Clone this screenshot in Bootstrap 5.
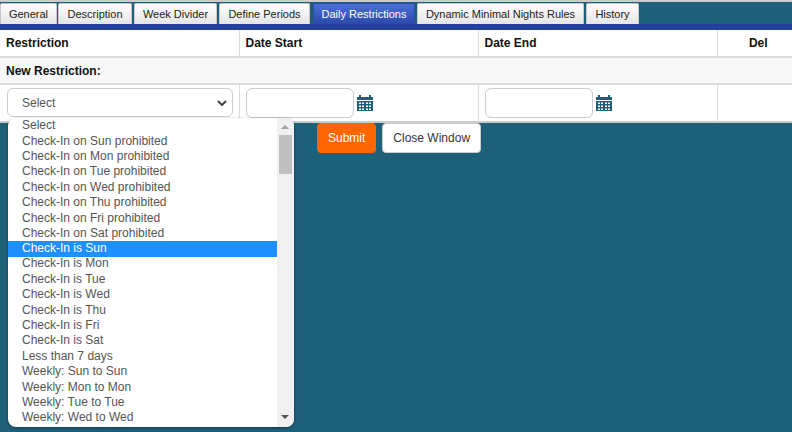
<!DOCTYPE html>
<html lang="en"><head><meta charset="utf-8"><title>Daily Restrictions</title>
<link href="https://cdn.jsdelivr.net/npm/bootstrap@5.3.0/dist/css/bootstrap.min.css" rel="stylesheet">
<style>
html,body{height:100%}
body{margin:0;background:#1f6079;font-family:"Liberation Sans",Arial,sans-serif;font-size:12px;color:#333;overflow:hidden;position:relative;border-top:2px solid #ccc}
.tabbar{padding-top:1px;height:22px;flex-wrap:nowrap;border-bottom:0}
.tabbar .nav-item{flex:none}
.tabbar .nav-link{height:21px;padding:0;text-align:center;line-height:20px;font-size:11px;color:#222;background:linear-gradient(#fff,#e4e4e4);border:1px solid #c8c8c8;border-bottom:0;border-radius:2px 2px 0 0;white-space:nowrap}
.tabbar .nav-link.active{background:linear-gradient(#4a70d8,#2b49a8);color:#fff;border-color:#2b49a8}
.tabbar .nav-item:nth-child(1){width:57px;margin-right:1px}
.tabbar .nav-item:nth-child(2){width:74px;margin-right:2px}
.tabbar .nav-item:nth-child(3){width:83px;margin-right:2px}
.tabbar .nav-item:nth-child(4){width:91px;margin-right:3px}
.tabbar .nav-item:nth-child(5){width:102px;margin-right:2px}
.tabbar .nav-item:nth-child(6){width:167px;margin-right:2px}
.tabbar .nav-item:nth-child(7){width:53px}
.tabband{height:6px;background:#25409a}
.resttable{width:100%;table-layout:fixed;background:#fff;margin:0;border-collapse:collapse;border-bottom:2px solid #ccc}
.resttable th,.resttable td{padding:0 6px;border-color:#ddd;border-style:solid;border-width:0 1px 0 0;vertical-align:middle;font-size:12px;color:#111}
.resttable th:last-child,.resttable td:last-child{border-right:0}
.resttable .delhead{padding-left:13px}
.headrow th{height:27px;border-bottom:2px solid #ddd}
.newrow th{height:27px;background:#f8f8f8;border-bottom:2px solid #ddd;border-right:0}
.formrow td{height:38px;padding-bottom:1px}
.pickbox{height:29px;width:226px;margin:0 0 0 1px;font-size:12px;color:#555;padding:0 14px;border:1px solid #ccc;border-radius:6px;background-color:#fff;background-position:right 5px center;background-size:10px 6px;background-image:url("data:image/svg+xml,%3Csvg xmlns='http://www.w3.org/2000/svg' viewBox='0 0 10 6'%3E%3Cpath fill='none' stroke='%23444' stroke-width='2' d='M1 1l4 4 4-4'/%3E%3C/svg%3E")}
.datebox{width:108px;height:30px;border:1px solid #ccc;border-radius:6px;background:#fff;padding:0 6px;margin-right:3px}
.calicon{display:block;flex:none}
.dropbox{position:absolute;left:8px;top:116px;width:286px;height:309px;background:#fff;border-radius:8px;overflow:hidden;box-shadow:0 1px 3px rgba(0,0,0,.45);display:flex}
.optlist{flex:1;margin:0;padding:.15px 0 0;min-width:0;border-radius:0}
.optlist .list-group-item{border:0;padding:0 0 0 14px;height:15.42px;line-height:15.42px;font-size:12px;color:#555;background:transparent;white-space:nowrap;border-radius:0}
.optlist .list-group-item.active{background:#1e90ff;color:#fff;height:16px;margin-top:0;margin-bottom:-1px}
.scrolltrack{width:17px;flex:none;background:#f0f0f0;position:relative}
.scrollthumb{position:absolute;left:2px;top:17px;width:13px;height:39px;background:#c0c0c0}
.arrowup,.arrowdown{position:absolute;left:4px;width:0;height:0;border-left:4px solid transparent;border-right:4px solid transparent}
.arrowup{top:7px;border-bottom:4px solid #a0a0a0}
.arrowdown{bottom:8px;border-top:4px solid #555}
.actionrow{position:absolute;left:317px;top:121px;gap:6px}
.actionrow .btn{height:30px;font-size:12px;padding:0 10px;border-radius:4px;line-height:28px}
.submitbtn{background:#f60;border:1px solid #f60;color:#fff}
.closebtn{background:#fff;border:1px solid #ccc;color:#333}
</style></head>
<body>
<ul class="nav tabbar d-flex">
<li class="nav-item"><a class="nav-link" href="#">General</a></li>
<li class="nav-item"><a class="nav-link" href="#">Description</a></li>
<li class="nav-item"><a class="nav-link" href="#">Week Divider</a></li>
<li class="nav-item"><a class="nav-link" href="#">Define Periods</a></li>
<li class="nav-item"><a class="nav-link active" href="#">Daily Restrictions</a></li>
<li class="nav-item"><a class="nav-link" href="#">Dynamic Minimal Nights Rules</a></li>
<li class="nav-item"><a class="nav-link" href="#">History</a></li>
</ul>
<div class="tabband"></div>
<table class="table resttable">
<colgroup><col style="width:239px"><col style="width:239px"><col style="width:239px"><col></colgroup>
<thead><tr class="headrow"><th>Restriction</th><th>Date Start</th><th>Date End</th><th class="text-center delhead">Del</th></tr></thead>
<tbody>
<tr class="newrow"><th colspan="4">New Restriction:</th></tr>
<tr class="formrow">
<td><select class="form-select pickbox"><option>Select</option></select></td>
<td><div class="d-flex align-items-center"><input class="datebox" type="text">
<svg class="calicon" width="16" height="17" viewBox="0 0 16 17"><path fill="#1f6079" d="M0 3h2V1h2v2h8V1h2v2h2v3H0z"/><path fill="#1f6079" fill-rule="evenodd" d="M0 7h16v10H0zM2 8.500v1.500h2V8.500zM5 8.500v1.500h2V8.500zM9 8.500v1.500h2V8.500zM12 8.500v1.500h2V8.500zM2 11.500V13h2v-1.500zM5 11.500V13h2v-1.500zM9 11.500V13h2v-1.500zM12 11.500V13h2v-1.500zM2 14.500V16h2v-1.500zM5 14.500V16h2v-1.500zM9 14.500V16h2v-1.500zM12 14.500V16h2v-1.500z"/></svg></div></td>
<td><div class="d-flex align-items-center"><input class="datebox" type="text">
<svg class="calicon" width="16" height="17" viewBox="0 0 16 17"><path fill="#1f6079" d="M0 3h2V1h2v2h8V1h2v2h2v3H0z"/><path fill="#1f6079" fill-rule="evenodd" d="M0 7h16v10H0zM2 8.500v1.500h2V8.500zM5 8.500v1.500h2V8.500zM9 8.500v1.500h2V8.500zM12 8.500v1.500h2V8.500zM2 11.500V13h2v-1.500zM5 11.500V13h2v-1.500zM9 11.500V13h2v-1.500zM12 11.500V13h2v-1.500zM2 14.500V16h2v-1.500zM5 14.500V16h2v-1.500zM9 14.500V16h2v-1.500zM12 14.500V16h2v-1.500z"/></svg></div></td>
<td></td>
</tr></tbody></table>
<div class="d-flex actionrow">
<button class="btn submitbtn" type="button">Submit</button>
<button class="btn closebtn" type="button">Close Window</button>
</div>
<div class="dropbox">
<ul class="list-group optlist">
<li class="list-group-item">Select</li>
<li class="list-group-item">Check-In on Sun prohibited</li>
<li class="list-group-item">Check-In on Mon prohibited</li>
<li class="list-group-item">Check-In on Tue prohibited</li>
<li class="list-group-item">Check-In on Wed prohibited</li>
<li class="list-group-item">Check-In on Thu prohibited</li>
<li class="list-group-item">Check-In on Fri prohibited</li>
<li class="list-group-item">Check-In on Sat prohibited</li>
<li class="list-group-item active">Check-In is Sun</li>
<li class="list-group-item">Check-In is Mon</li>
<li class="list-group-item">Check-In is Tue</li>
<li class="list-group-item">Check-In is Wed</li>
<li class="list-group-item">Check-In is Thu</li>
<li class="list-group-item">Check-In is Fri</li>
<li class="list-group-item">Check-In is Sat</li>
<li class="list-group-item">Less than 7 days</li>
<li class="list-group-item">Weekly: Sun to Sun</li>
<li class="list-group-item">Weekly: Mon to Mon</li>
<li class="list-group-item">Weekly: Tue to Tue</li>
<li class="list-group-item">Weekly: Wed to Wed</li>
</ul>
<div class="scrolltrack"><span class="arrowup"></span><span class="scrollthumb"></span><span class="arrowdown"></span></div>
</div>
<script src="https://cdn.jsdelivr.net/npm/bootstrap@5.3.0/dist/js/bootstrap.bundle.min.js"></script>
</body></html>
